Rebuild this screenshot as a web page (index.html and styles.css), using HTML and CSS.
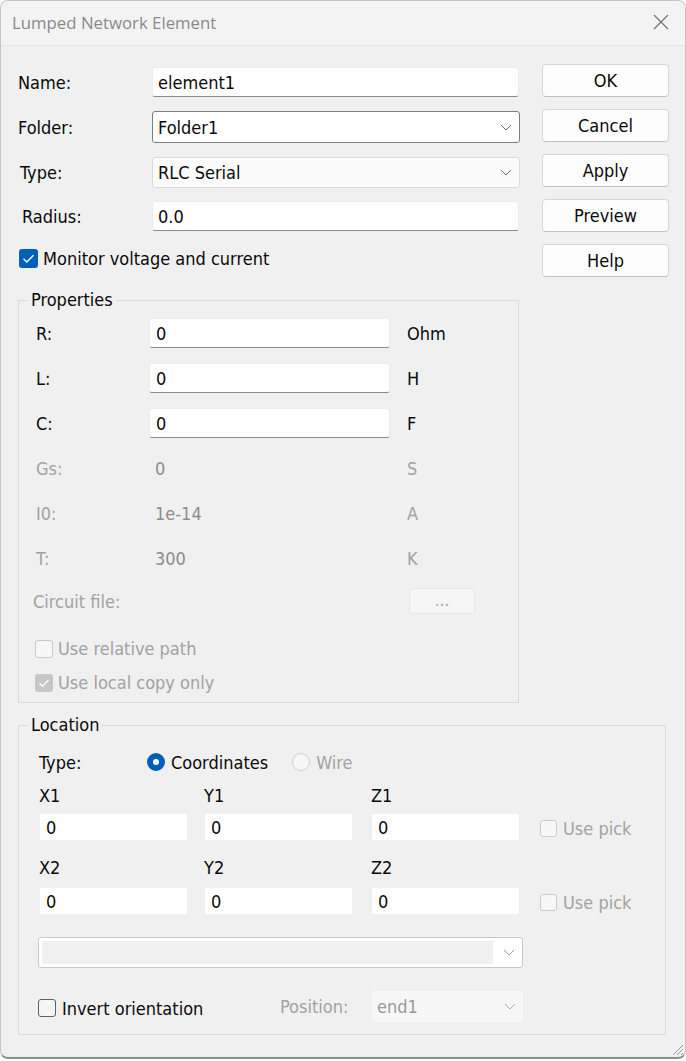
FILE: index.html
```html
<!DOCTYPE html>
<html>
<head>
<meta charset="utf-8">
<title>Lumped Network Element</title>
<link rel="stylesheet" href="styles.css">
</head>
<body>
<div class="window">
  <header class="titlebar">
    <span class="title">Lumped Network Element</span>
    <svg class="close" width="16" height="16" viewBox="0 0 16 16"><path d="M1 1 L15 15 M15 1 L1 15" stroke="#6f6f6f" stroke-width="1.1" fill="none"/></svg>
  </header>
  <main class="content">
    <div class="top">
      <div class="form">
        <div class="frow r-name"><span class="flabel">Name:</span><div class="edit">element1</div></div>
        <div class="frow r-folder"><span class="flabel">Folder:</span><div class="combo combo-focus"><span class="ctext">Folder1</span><svg class="chev" width="12" height="7" viewBox="0 0 12 7"><path d="M1 1 L6 6 L11 1" stroke="#6a6a6a" stroke-width="1" fill="none"/></svg></div></div>
        <div class="frow r-type"><span class="flabel lbl-type">Type:</span><div class="combo combo-light"><span class="ctext">RLC Serial</span><svg class="chev" width="12" height="7" viewBox="0 0 12 7"><path d="M1 1 L6 6 L11 1" stroke="#6a6a6a" stroke-width="1" fill="none"/></svg></div></div>
        <div class="frow r-radius"><span class="flabel lbl-radius">Radius:</span><div class="edit">0.0</div></div>
        <div class="checkrow monitor"><span class="cb cb-on"><svg width="19" height="19" viewBox="0 0 19 19"><path d="M4.5 9.8 L7.8 13 L14.5 6.2" stroke="#fff" stroke-width="1.3" fill="none"/></svg></span><span>Monitor voltage and current</span></div>
      </div>
      <div class="buttons">
        <div class="btn">OK</div>
        <div class="btn">Cancel</div>
        <div class="btn">Apply</div>
        <div class="btn">Preview</div>
        <div class="btn">Help</div>
      </div>
    </div>

    <fieldset class="group props">
      <legend>Properties</legend>
      <div class="pgrid">
        <span class="plabel">R:</span><div class="edit pedit">0</div><span class="unit">Ohm</span>
        <span class="plabel">L:</span><div class="edit pedit">0</div><span class="unit">H</span>
        <span class="plabel">C:</span><div class="edit pedit">0</div><span class="unit">F</span>
        <span class="plabel dis">Gs:</span><span class="pval">0</span><span class="unit dis">S</span>
        <span class="plabel dis">I0:</span><span class="pval">1e-14</span><span class="unit dis">A</span>
        <span class="plabel dis">T:</span><span class="pval">300</span><span class="unit dis">K</span>
        <span class="plabel dis circuit">Circuit file:</span><span></span><span class="unit"><span class="dots">...</span></span>
      </div>
      <div class="checkrow dis rel"><span class="cb cb-dis"></span><span>Use relative path</span></div>
      <div class="checkrow dis local"><span class="cb cb-dis-on"><svg width="18" height="18" viewBox="0 0 18 18"><path d="M4.5 9.3 L7.5 12.3 L13.5 6" stroke="#fff" stroke-width="1.3" fill="none"/></svg></span><span>Use local copy only</span></div>
    </fieldset>

    <fieldset class="group loc">
      <legend>Location</legend>
      <div class="typerow">
        <span class="tlabel">Type:</span>
        <span class="radio radio-on"></span><span class="rtext">Coordinates</span>
        <span class="radio radio-dis"></span><span class="rtext dis">Wire</span>
      </div>
      <div class="coords">
        <span class="clabel">X1</span><span class="clabel">Y1</span><span class="clabel">Z1</span><span></span>
        <div class="flat">0</div><div class="flat">0</div><div class="flat">0</div>
        <div class="checkrow dis pick"><span class="cb cb-dis small"></span><span>Use pick</span></div>
        <span class="clabel l2">X2</span><span class="clabel l2">Y2</span><span class="clabel l2">Z2</span><span></span>
        <div class="flat">0</div><div class="flat">0</div><div class="flat">0</div>
        <div class="checkrow dis pick"><span class="cb cb-dis small"></span><span>Use pick</span></div>
      </div>
      <div class="bigcombo">
        <div class="bigfill"></div>
        <svg class="chev" width="12" height="7" viewBox="0 0 12 7"><path d="M1 1 L6 6 L11 1" stroke="#a0a0a0" stroke-width="1" fill="none"/></svg>
      </div>
      <div class="invrow">
        <div class="checkrow invert"><span class="cb cb-off"></span><span>Invert orientation</span></div>
        <span class="poslabel dis">Position:</span>
        <div class="poscombo"><span>end1</span><svg class="chev" width="12" height="7" viewBox="0 0 12 7"><path d="M1 1 L6 6 L11 1" stroke="#a8a8a8" stroke-width="1" fill="none"/></svg></div>
      </div>
    </fieldset>
  </main>
  <svg class="grip" width="14" height="14" viewBox="0 0 14 14"><path d="M13 3 L3 13 M13 7 L7 13 M13 11 L11 13" stroke="#9a9a9a" stroke-width="1" fill="none"/></svg>
</div>
</body>
</html>
```
FILE: styles.css
```css
html, body {
  margin: 0;
  padding: 0;
  background: #ffffff;
}
body {
  width: 686px;
  height: 1061px;
  overflow: hidden;
}
.window {
  position: relative;
  width: 686px;
  height: 1059px;
  box-sizing: border-box;
  background: #f0f0f0;
  border: 1px solid #c4c4c4;
  border-bottom: 2px solid #8e8e8e;
  border-radius: 8px;
  overflow: hidden;
  font-family: "DejaVu Sans Condensed", "DejaVu Sans", sans-serif;
  font-stretch: condensed;
  font-size: 18px;
  color: #0a0a0a;
}
.titlebar {
  height: 44px;
  background: #f3f3f3;
  border-bottom: 1px solid #e3e3e3;
  display: flex;
  align-items: center;
  justify-content: space-between;
  padding: 0 16px 0 11px;
}
.title {
  font-family: "Open Sans", "Noto Sans", sans-serif;
  font-stretch: normal;
  font-size: 16.8px;
  color: #8a8a8a;
  margin-top: -2px;
}
.close { margin-top: -3px; }

.content {
  padding: 0 0 0 17px;
}
.top {
  display: flex;
  padding-top: 19px;
}
.form {
  width: 502px;
  padding-top: 2px;
  display: flex;
  flex-direction: column;
}
.frow {
  display: flex;
  align-items: center;
}
.r-name { height: 30px; }
.r-folder { height: 32px; margin-top: 14px; }
.r-type { height: 31px; margin-top: 14px; }
.r-radius { height: 30px; margin-top: 13px; }
.flabel {
  width: 134px;
  flex: none;
}
.lbl-type { padding-left: 2px; width: 132px; }
.lbl-radius { padding-left: 4px; width: 130px; }
.edit {
  box-sizing: border-box;
  height: 100%;
  flex: 1;
  background: #ffffff;
  border: 1px solid #ececec;
  border-bottom: 1px solid #8a8a8a;
  border-radius: 3px;
  display: flex;
  align-items: center;
  padding-left: 5px;
  margin-right: 1px;
}
.combo {
  box-sizing: border-box;
  height: 100%;
  flex: 1;
  border-radius: 3px;
  display: flex;
  align-items: center;
  justify-content: space-between;
  padding: 0 7px 0 5px;
}
.combo-focus {
  background: #ffffff;
  border: 1px solid #7f7f7f;
}
.combo-light {
  background: #fbfbfb;
  border: 1px solid #dadada;
}
.chev { flex: none; }

.checkrow {
  display: flex;
  align-items: center;
}
.monitor {
  margin-top: 17px;
  margin-left: 1px;
  height: 20px;
}
.cb {
  box-sizing: border-box;
  width: 19px;
  height: 19px;
  border-radius: 3px;
  margin-right: 5px;
  flex: none;
  display: flex;
}
.cb-on { background: #005fb8; }
.cb-off {
  width: 18px;
  height: 18px;
  border: 1px solid #5f5f5f;
  background: #f6f6f6;
}
.cb-dis {
  width: 18px;
  height: 18px;
  border: 1px solid #cacaca;
  background: #f7f7f7;
}
.cb-dis.small { width: 17px; height: 17px; }
.cb-dis-on {
  width: 18px;
  height: 18px;
  background: #c6c6c6;
}

.buttons {
  margin-left: 22px;
  width: 127px;
  display: flex;
  flex-direction: column;
  gap: 12px;
  margin-top: -1px;
}
.btn {
  box-sizing: border-box;
  height: 33px;
  background: #fdfdfd;
  border: 1px solid #d6d6d6;
  border-bottom-color: #c2c2c2;
  border-radius: 4px;
  display: flex;
  align-items: center;
  justify-content: center;
}

.group {
  margin: 0;
  border: 1px solid #d9d9d9;
  border-radius: 0;
  min-width: 0;
}
.group legend {
  line-height: 20px;
  padding: 0 3px;
}
.dis { color: #a2a2a2; }

.props {
  margin-top: 13px;
  width: 501px;
  box-sizing: border-box;
  padding: 8px 0 10px 17px;
}
.props legend { margin-left: -8px; }
.pgrid {
  display: grid;
  grid-template-columns: 113px 242px auto;
  grid-template-rows: repeat(6, 30px) 26px;
  row-gap: 15px;
  align-items: center;
}
.pedit { height: 30px; padding-left: 6px; }
.unit { padding-left: 16px; }
.pval { padding-left: 6px; color: #8c8c8c; }
.circuit { margin-left: -3px; }
.dots {
  box-sizing: border-box;
  display: flex;
  align-items: center;
  justify-content: center;
  margin-left: 2px;
  width: 66px;
  height: 26px;
  background: #f6f6f6;
  border: 1px solid #e6e6e6;
  border-radius: 4px;
  color: #a4a4a4;
  font-size: 17px;
  padding-bottom: 2px;
}
.rel { margin-top: 25px; height: 19px; }
.local { margin-top: 15px; height: 19px; }
.rel .cb, .local .cb { margin-left: -1px; margin-right: 5px; }

.loc {
  margin-top: 12px;
  width: 648px;
  box-sizing: border-box;
  padding: 18px 0 12px 20px;
}
.loc legend { margin-left: -11px; }
.typerow {
  display: flex;
  align-items: center;
  height: 18px;
}
.tlabel { width: 108px; flex: none; }
.radio {
  box-sizing: border-box;
  width: 18px;
  height: 18px;
  border-radius: 50%;
  flex: none;
}
.radio-on {
  border: 6px solid #005fb8;
  background: #ffffff;
}
.radio-dis {
  border: 1px solid #cfcfcf;
  background: #f6f6f6;
  margin-left: 24px;
}
.rtext { margin-left: 6px; }

.coords {
  margin-top: 15px;
  margin-left: 1px;
  display: grid;
  grid-template-columns: 165px 167px 168px auto;
  align-items: center;
}
.clabel { height: 20px; line-height: 20px; margin-bottom: 8px; margin-left: -1px; }
.l2 { margin-top: 18px; margin-bottom: 10px; }
.flat {
  box-sizing: border-box;
  width: 147px;
  height: 26px;
  background: #ffffff;
  display: flex;
  align-items: center;
  padding-left: 6px;
}
.pick { margin-top: 3px; }
.pick .cb { margin-right: 6px; }

.bigcombo {
  box-sizing: border-box;
  margin-top: 23px;
  margin-left: -1px;
  width: 485px;
  height: 31px;
  background: #ffffff;
  border: 1px solid #c9c9c9;
  border-radius: 3px;
  padding: 3px 0 3px 3px;
  display: flex;
  align-items: center;
}
.bigfill {
  flex: 1;
  height: 100%;
  background: #f0f0f0;
}
.bigcombo .chev { margin: 0 7px 0 10px; }

.invrow {
  margin-top: 23px;
  margin-left: -1px;
  height: 31px;
  display: flex;
  align-items: center;
}
.invert { width: 242px; flex: none; margin-top: 3px; }
.invert .cb { margin-right: 6px; }
.poslabel { width: 92px; flex: none; }
.poscombo {
  box-sizing: border-box;
  width: 151px;
  height: 31px;
  background: #f7f7f7;
  border-radius: 3px;
  display: flex;
  align-items: center;
  justify-content: space-between;
  padding: 0 7px 0 5px;
  color: #9a9a9a;
}

.grip {
  position: absolute;
  right: 1px;
  bottom: 1px;
}
```
